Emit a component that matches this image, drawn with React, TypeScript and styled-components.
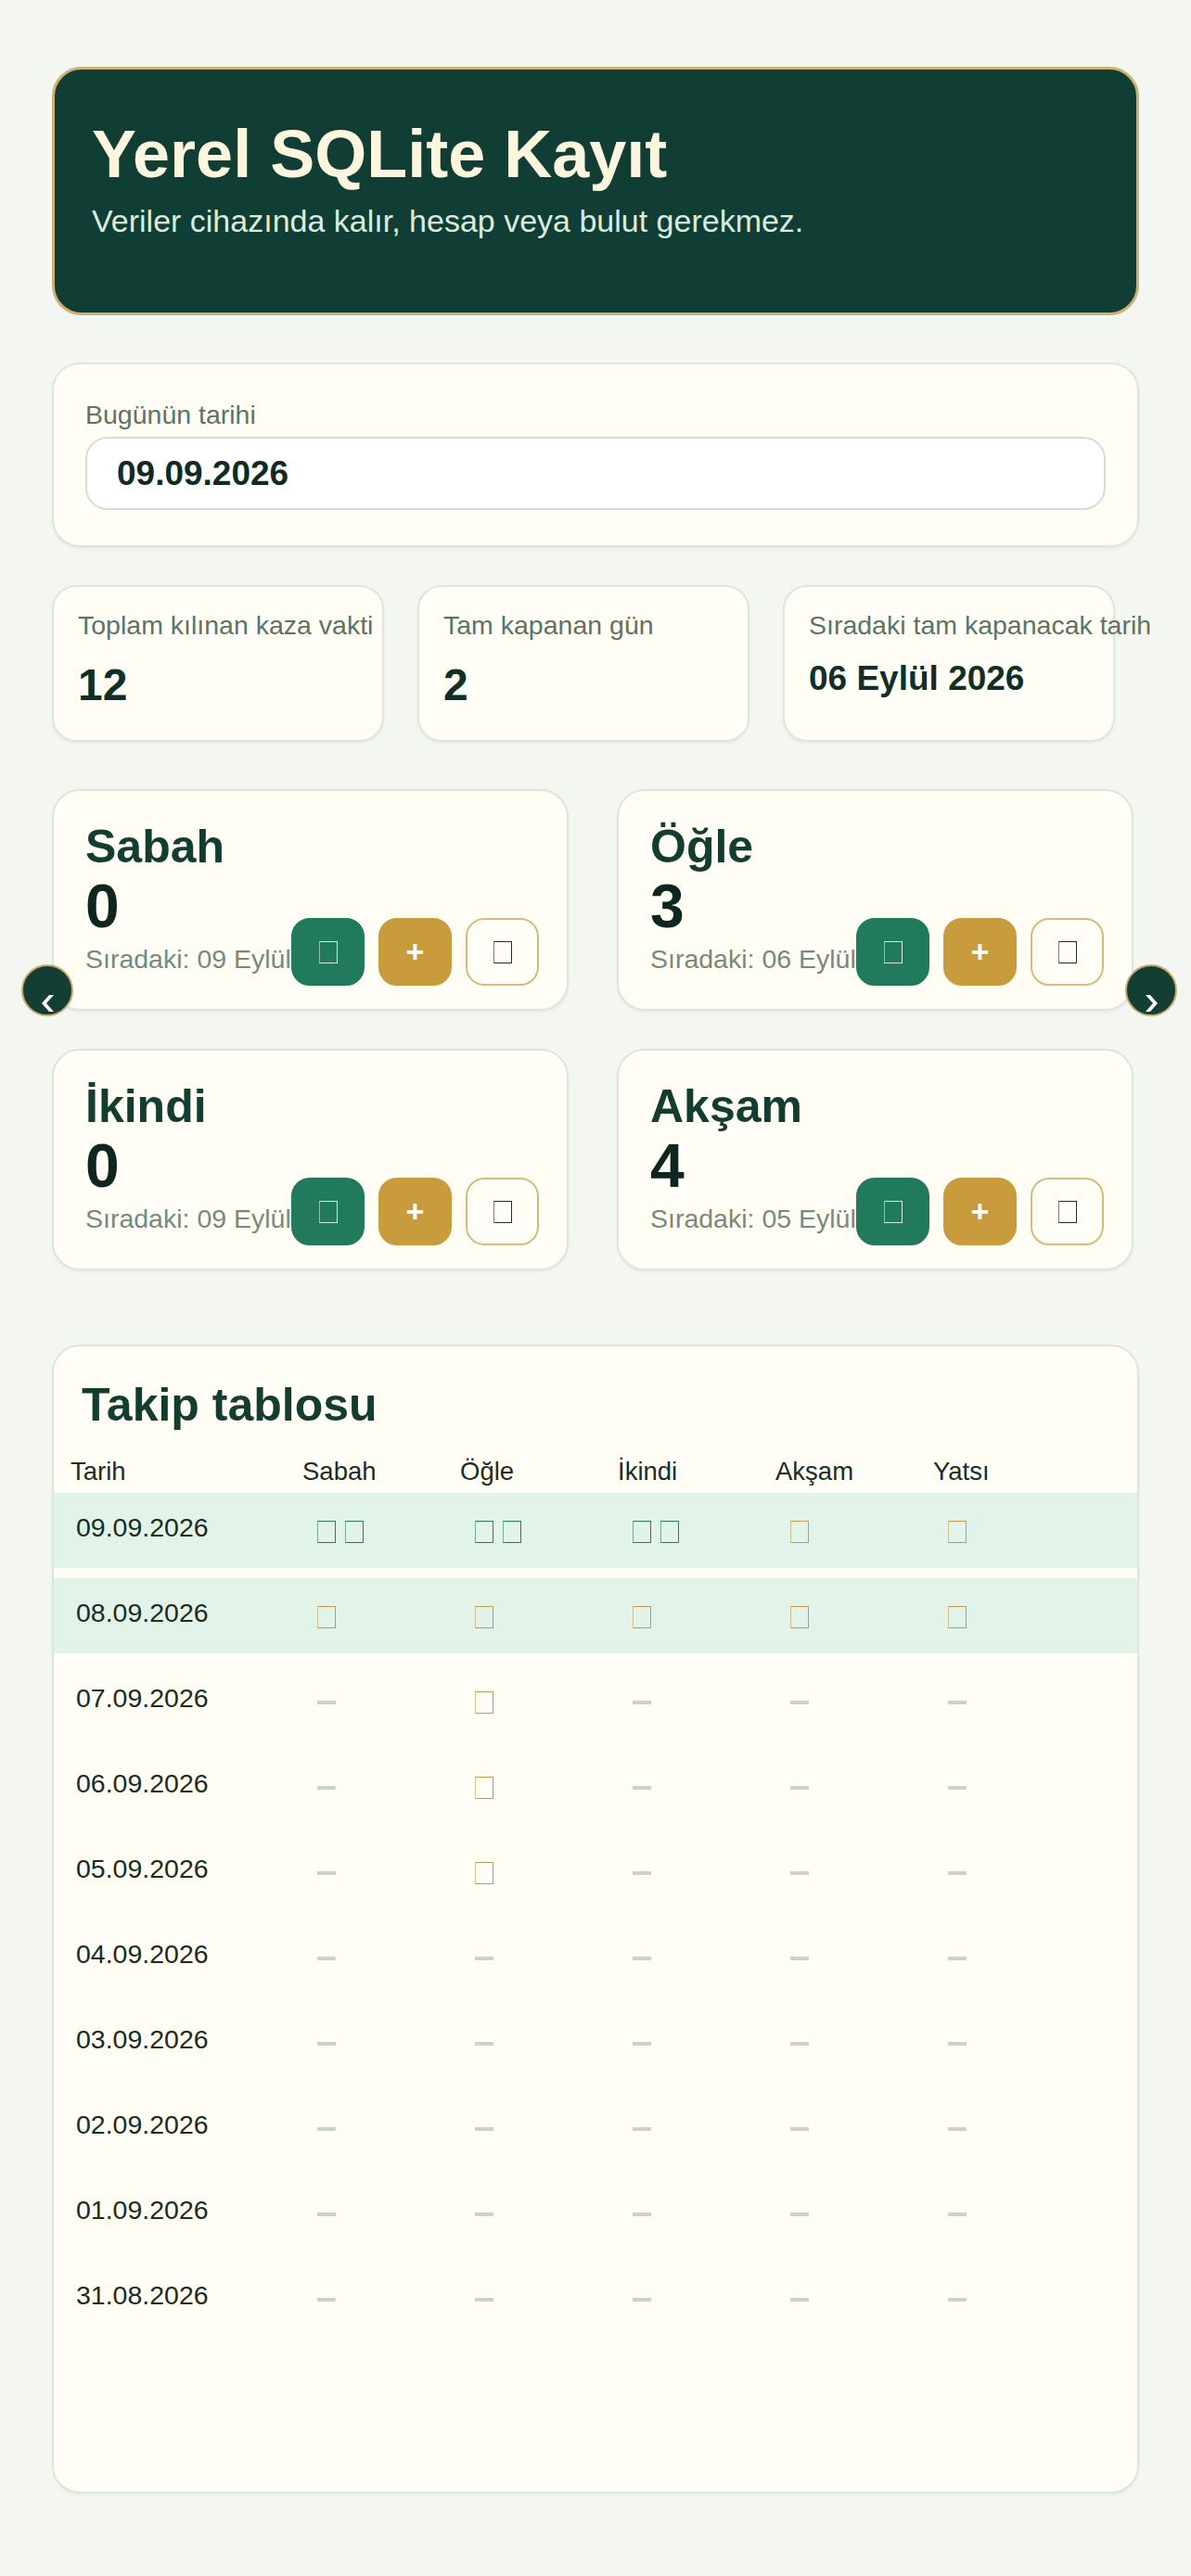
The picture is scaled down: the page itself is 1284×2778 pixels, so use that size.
import React from 'react'
import styled, { createGlobalStyle } from 'styled-components'

const GlobalStyle = createGlobalStyle`
  html, body {
    margin: 0;
    padding: 0;
    background: #f3f6f1;
  }
  body {
    font-family: 'Liberation Sans', Arial, sans-serif;
    color: #132e26;
  }
  * {
    box-sizing: border-box;
  }
`

const Page = styled.main`
  padding: 72px 56px 91px;
  min-height: 2778px;
`

const Hero = styled.header`
  height: 268px;
  padding: 50px 40px 0;
  background: #113e34;
  border: 3px solid #cfb073;
  border-radius: 32px;
`

const HeroTitle = styled.h1`
  margin: 0;
  font-size: 72px;
  font-weight: 700;
  color: #fdf6de;
`

const HeroText = styled.p`
  margin: 12px 0 0;
  font-size: 34px;
  color: #d9ecdf;
`

const Card = styled.section`
  background: #fffdf4;
  border: 2px solid #dce6dd;
  border-radius: 30px;
  box-shadow: 0 2px 3px rgba(40, 70, 50, 0.05);
`

const DateCard = styled(Card)`
  margin-top: 51px;
  padding: 38px 34px;
`

const FieldLabel = styled.div`
  font-size: 28.5px;
  line-height: 32px;
  color: #5d7364;
  margin-bottom: 8px;
`

const DateInput = styled.input`
  display: block;
  width: 100%;
  height: 79px;
  padding: 0 32px;
  border: 2px solid #d3dfd5;
  border-radius: 24px;
  background: #fff;
  font-family: 'Liberation Sans', Arial, sans-serif;
  font-size: 37px;
  font-weight: 700;
  color: #112a22;
  outline: none;
`

const StatsGrid = styled.div`
  display: grid;
  grid-template-columns: repeat(3, 358px);
  gap: 36px;
  margin-top: 41px;
`

const StatCard = styled(Card)`
  height: 169px;
  padding: 25px 26px;
  border-radius: 26px;
`

const StatLabel = styled.div`
  font-size: 28.5px;
  line-height: 32px;
  color: #5d7364;
  white-space: nowrap;
`

const StatValue = styled.div<{ $small?: boolean }>`
  margin-top: 21px;
  font-size: ${({ $small }) => ($small ? '37px' : '48px')};
  line-height: ${({ $small }) => ($small ? '41px' : '55px')};
  font-weight: 700;
  color: #112f26;
`

const PrayerGrid = styled.div`
  position: relative;
  display: grid;
  grid-template-columns: repeat(2, 557px);
  column-gap: 52px;
  row-gap: 41px;
  margin-top: 51px;
`

const PrayerCard = styled(Card)`
  position: relative;
  height: 239px;
  padding: 35px 34px;
  overflow: hidden;
`

const PrayerName = styled.h2`
  margin: 0;
  font-size: 50px;
  line-height: 1;
  font-weight: 700;
  color: #133d31;
`

const PrayerCount = styled.div`
  margin-top: 6px;
  font-size: 66px;
  line-height: 1;
  font-weight: 700;
  color: #0f2620;
`

const NextDate = styled.div`
  margin-top: 8px;
  font-size: 28.5px;
  line-height: 32px;
  color: #788a7b;
  white-space: nowrap;
`

const Actions = styled.div`
  position: absolute;
  right: 30px;
  bottom: 25px;
  display: flex;
  gap: 15px;
`

const ActionButton = styled.button<{ $tone: 'green' | 'gold' | 'plain' }>`
  width: 79px;
  height: 73px;
  display: flex;
  align-items: center;
  justify-content: center;
  border-radius: 20px;
  border: 2px solid
    ${({ $tone }) => ($tone === 'green' ? '#217a5b' : $tone === 'gold' ? '#c89b3c' : '#d8bb7c')};
  background: ${({ $tone }) => ($tone === 'green' ? '#217a5b' : $tone === 'gold' ? '#c89b3c' : '#fffdf6')};
  color: #fff;
  font-family: 'Liberation Sans', Arial, sans-serif;
  font-size: 34px;
  font-weight: 700;
  padding: 0;
  cursor: pointer;
`

const Tofu = styled.span<{ $color: string }>`
  display: inline-block;
  width: 20px;
  height: 24px;
  border: 1.5px solid ${({ $color }) => $color};
  border-left-color: ${({ $color }) => $color}99;
`

const NavButton = styled.button<{ $side: 'left' | 'right' }>`
  position: absolute;
  top: 189px;
  ${({ $side }) => ($side === 'left' ? 'left: -33px;' : 'right: -41px;')}
  width: 56px;
  height: 56px;
  padding: 0 0 3px;
  display: flex;
  align-items: flex-end;
  justify-content: center;
  border-radius: 50%;
  border: 2px solid #c8a96b;
  background: #123e33;
  cursor: pointer;

  svg {
    display: block;
  }
`

const TableCard = styled(Card)`
  margin-top: 80px;
  padding: 34px 0 168px;
`

const TableTitle = styled.h2`
  margin: 0;
  padding: 0 30px;
  font-size: 50px;
  font-weight: 700;
  color: #133d31;
`

const columns = '250px repeat(5, 170px)'

const HeadRow = styled.div`
  display: grid;
  grid-template-columns: ${columns};
  margin: 27px 0 8px;
  height: 31px;
  font-size: 27.5px;
  line-height: 31px;
  color: #1c2d25;

  span {
    padding-left: 18px;
  }
`

const Rows = styled.div`
  display: flex;
  flex-direction: column;
  gap: 11px;
`

const Row = styled.div<{ $filled?: boolean }>`
  display: grid;
  grid-template-columns: ${columns};
  align-items: center;
  height: 81px;
  background: ${({ $filled }) => ($filled ? '#e2f4e9' : 'transparent')};
`

const DateCell = styled.div`
  padding: 0 0 8px 24px;
  font-size: 28.5px;
  line-height: 32px;
  color: #1a2c24;
`

const MarkCell = styled.div`
  display: flex;
  align-items: center;
  gap: 10px;
  padding: 2px 0 0 34px;
`

const Dash = styled.span`
  display: inline-block;
  width: 20px;
  height: 4px;
  background: #c9d3c7;
`

type Mark = 'pair' | 'gold' | 'none'

const GREEN = '#2a7a5c'
const GOLD = '#c39a4c'

const prayers = [
  { name: 'Sabah', count: 0, next: '09 Eylül 2026' },
  { name: 'Öğle', count: 3, next: '06 Eylül 2026' },
  { name: 'İkindi', count: 0, next: '09 Eylül 2026' },
  { name: 'Akşam', count: 4, next: '05 Eylül 2026' },
]

const history: { date: string; filled?: boolean; marks: Mark[] }[] = [
  { date: '09.09.2026', filled: true, marks: ['pair', 'pair', 'pair', 'gold', 'gold'] },
  { date: '08.09.2026', filled: true, marks: ['gold', 'gold', 'gold', 'gold', 'gold'] },
  { date: '07.09.2026', marks: ['none', 'gold', 'none', 'none', 'none'] },
  { date: '06.09.2026', marks: ['none', 'gold', 'none', 'none', 'none'] },
  { date: '05.09.2026', marks: ['none', 'gold', 'none', 'none', 'none'] },
  { date: '04.09.2026', marks: ['none', 'none', 'none', 'none', 'none'] },
  { date: '03.09.2026', marks: ['none', 'none', 'none', 'none', 'none'] },
  { date: '02.09.2026', marks: ['none', 'none', 'none', 'none', 'none'] },
  { date: '01.09.2026', marks: ['none', 'none', 'none', 'none', 'none'] },
  { date: '31.08.2026', marks: ['none', 'none', 'none', 'none', 'none'] },
]

function Chevron({ dir }: { dir: 'left' | 'right' }) {
  const points = dir === 'left' ? '13,0 8,0 0,9 8,18 13,18 5,9' : '0,0 5,0 13,9 5,18 0,18 8,9'
  return (
    <svg width='13' height='18' viewBox='0 0 13 18'>
      <polygon points={points} fill='#ffffff' />
    </svg>
  )
}

function MarkView({ mark }: { mark: Mark }) {
  if (mark === 'pair') {
    return (
      <>
        <Tofu $color={GREEN} />
        <Tofu $color={GREEN} />
      </>
    )
  }
  if (mark === 'gold') return <Tofu $color={GOLD} />
  return <Dash />
}

export default function App() {
  return (
    <>
      <GlobalStyle />
      <Page>
        <Hero>
          <HeroTitle>Yerel SQLite Kayıt</HeroTitle>
          <HeroText>Veriler cihazında kalır, hesap veya bulut gerekmez.</HeroText>
        </Hero>

        <DateCard>
          <FieldLabel>Bugünün tarihi</FieldLabel>
          <DateInput readOnly value='09.09.2026' />
        </DateCard>

        <StatsGrid>
          <StatCard>
            <StatLabel>Toplam kılınan kaza vakti</StatLabel>
            <StatValue>12</StatValue>
          </StatCard>
          <StatCard>
            <StatLabel>Tam kapanan gün</StatLabel>
            <StatValue>2</StatValue>
          </StatCard>
          <StatCard>
            <StatLabel>Sıradaki tam kapanacak tarih</StatLabel>
            <StatValue $small>06 Eylül 2026</StatValue>
          </StatCard>
        </StatsGrid>

        <PrayerGrid>
          {prayers.map((p) => (
            <PrayerCard key={p.name}>
              <PrayerName>{p.name}</PrayerName>
              <PrayerCount>{p.count}</PrayerCount>
              <NextDate>Sıradaki: {p.next}</NextDate>
              <Actions>
                <ActionButton $tone='green'>
                  <Tofu $color='#d5eadf' />
                </ActionButton>
                <ActionButton $tone='gold'>+</ActionButton>
                <ActionButton $tone='plain'>
                  <Tofu $color='#1f2f28' />
                </ActionButton>
              </Actions>
            </PrayerCard>
          ))}
          <NavButton $side='left' aria-label='Önceki'>
            <Chevron dir='left' />
          </NavButton>
          <NavButton $side='right' aria-label='Sonraki'>
            <Chevron dir='right' />
          </NavButton>
        </PrayerGrid>

        <TableCard>
          <TableTitle>Takip tablosu</TableTitle>
          <HeadRow>
            <span>Tarih</span>
            <span>Sabah</span>
            <span>Öğle</span>
            <span>İkindi</span>
            <span>Akşam</span>
            <span>Yatsı</span>
          </HeadRow>
          <Rows>
            {history.map((r) => (
              <Row key={r.date} $filled={r.filled}>
                <DateCell>{r.date}</DateCell>
                {r.marks.map((m, i) => (
                  <MarkCell key={i}>
                    <MarkView mark={m} />
                  </MarkCell>
                ))}
              </Row>
            ))}
          </Rows>
        </TableCard>
      </Page>
    </>
  )
}
